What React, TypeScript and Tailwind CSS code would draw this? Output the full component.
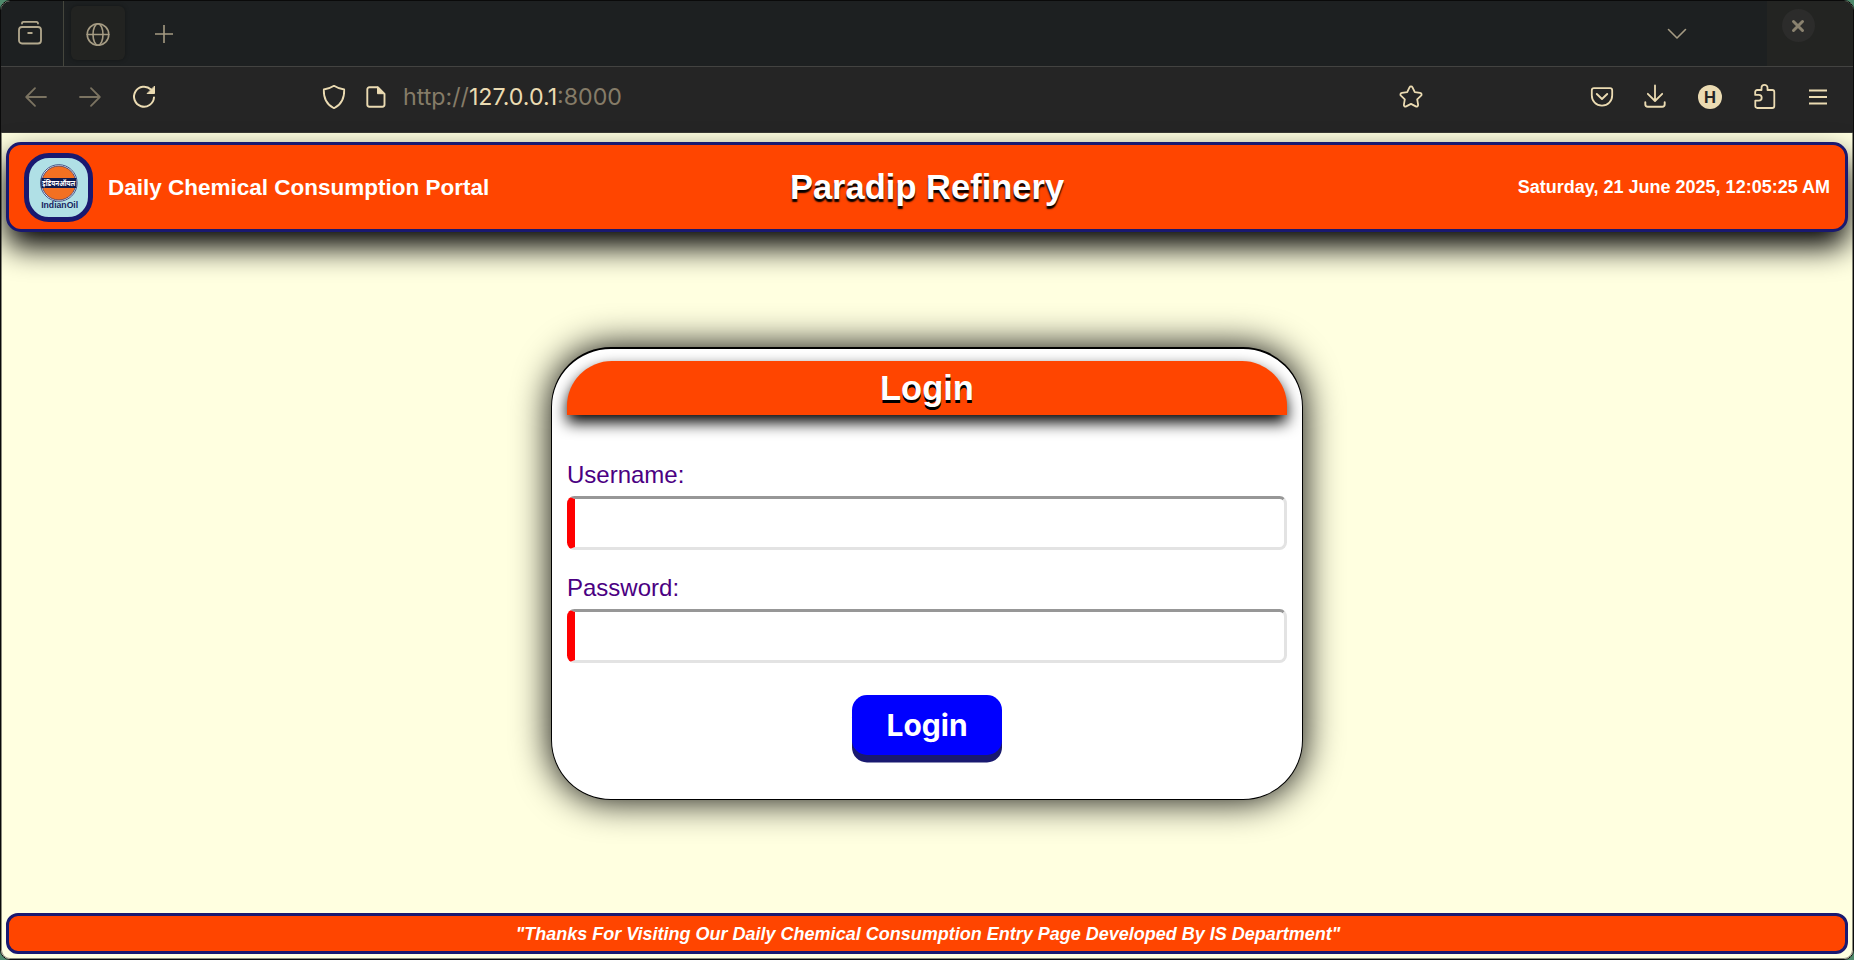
import React from "react";

type IconProps = { w: number; h: number; className?: string; children: React.ReactNode };

function Icon({ w, h, className = "", children }: IconProps) {
  return (
    <svg
      width={w}
      height={h}
      viewBox={`0 0 ${w} ${h}`}
      fill="none"
      stroke="currentColor"
      strokeWidth="1.6"
      strokeLinecap="round"
      strokeLinejoin="round"
      className={`shrink-0 ${className}`}
    >
      {children}
    </svg>
  );
}

function TabBar() {
  return (
    <div className="flex h-[66px] shrink-0 border-b border-[#434341] bg-[#1d2021] text-[#a59b83]">
      <div className="flex w-[63px] shrink-0 items-center border-r border-[#45463d] pl-[16px]">
        <Icon w={26} h={28} className="mt-px text-[#b3a98e]">
          <rect x="2" y="7" width="22" height="16.5" rx="3" strokeWidth="1.8" />
          <path d="M5 3.5c0-1.2.6-1.6 1.6-1.6h12.8c1 0 1.6.4 1.6 1.6" strokeWidth="1.8" />
          <path d="M10.5 13h5" strokeWidth="2" strokeLinecap="butt" />
        </Icon>
      </div>
      <div className="ml-[7px] mt-[5px] flex h-[54px] w-[54px] shrink-0 items-center justify-center rounded-md bg-[#222321] pt-px shadow-[0_0_4px_rgba(0,0,0,0.35)]">
        <Icon w={24} h={24}>
          <circle cx="12" cy="12.5" r="10.8" />
          <ellipse cx="12" cy="12.5" rx="5" ry="10.8" />
          <path d="M1.2 12.5h21.6" />
        </Icon>
      </div>
      <div className="flex w-[78px] items-center justify-center">
        <Icon w={20} h={20} className="mt-px">
          <path d="M10 1v18M1 10h18" strokeLinecap="butt" />
        </Icon>
      </div>
      <div className="flex-1" />
      <div className="flex w-[100px] items-center">
        <Icon w={20} h={12}>
          <path d="M1.5 1.5 10 10l8.500-8.500" />
        </Icon>
      </div>
      <div className="flex w-[86px] shrink-0 justify-center bg-[#232422] pr-[24px] pt-[8px]">
        <div className="flex h-[33px] w-[33px] items-center justify-center rounded-full bg-[#2c2c2b] text-[#8a826f]">
          <Icon w={14} h={14}>
            <path d="m2.500 2.500 9 9m0-9-9 9" strokeWidth="3" />
          </Icon>
        </div>
      </div>
    </div>
  );
}

function AddressBar() {
  return (
    <div className="flex h-[66px] shrink-0 items-center border-b border-[#3a3a36] bg-[#252525] pb-[5px] pl-[23px] pr-[25px] text-[#ebdbb2]">
      <Icon w={24} h={24} className="text-[#7b7361]">
        <path d="M22 12H2.500M11 3.200 2.200 12l8.800 8.800" strokeWidth="1.8" />
      </Icon>
      <Icon w={24} h={24} className="ml-[30px] text-[#7b7361]">
        <path d="M2 12h19.500M13 3.200l8.800 8.800-8.800 8.800" strokeWidth="1.8" />
      </Icon>
      <Icon w={26} h={26} className="ml-[29px]">
        <path d="M23 13.500a10 10 0 1 1-3-8" strokeWidth="2" />
        <path d="M23.500 2.500v7h-7z" fill="currentColor" strokeWidth="1" />
      </Icon>
      <Icon w={26} h={26} className="ml-[164px]">
        <path d="M13 1.800c3 2 6.500 3.200 10.200 3.700.3 8.200-2.500 15-10.200 18.700C5.300 20.500 2.500 13.700 2.800 5.500 6.500 5 10 3.800 13 1.800Z" strokeWidth="1.8" />
      </Icon>
      <Icon w={22} h={24} className="ml-[18px]">
        <path d="M4.500 2.200h8.300l6.700 6.700v10.600c0 1.300-.9 2.200-2.200 2.200H4.500c-1.300 0-2.200-.9-2.200-2.200V4.400c0-1.300.9-2.200 2.200-2.200Z" strokeWidth="1.9" />
        <path d="M12.500 2.200v6.500h6.500z" fill="currentColor" strokeWidth="1" />
      </Icon>
      <div className="ml-[16px] whitespace-pre pt-px font-['Inter',sans-serif] text-[23.200px] leading-none text-[#857c68]">
        http://<span className="text-[#ebdbb2]">127.0.0.1</span>:8000
      </div>
      <div className="flex-1" />
      <Icon w={26} h={26}>
        <path d="M13 2.300c.7 0 1.200.4 1.500 1l2.300 4.900 5.300.7c1.500.2 2 1.800 1 2.800l-3.900 3.700.9 5.300c.2 1.400-1 2.400-2.300 1.700L13 19.900l-4.800 2.500c-1.300.7-2.500-.3-2.300-1.700l.9-5.300-3.900-3.700c-1-1-.5-2.600 1-2.800l5.300-.7 2.300-4.900c.3-.6.8-1 1.500-1Z" strokeWidth="1.800" />
      </Icon>
      <Icon w={26} h={24} className="ml-[165px]">
        <path d="M5 3.200h16c1.300 0 2.200.9 2.200 2.200v4.800c0 5.800-4.300 10.400-10.200 10.400S2.800 16 2.800 10.200V5.400c0-1.300.9-2.200 2.200-2.200Z" strokeWidth="1.800" />
        <path d="m7.800 9 5.200 5 5.200-5" strokeWidth="1.900" />
      </Icon>
      <Icon w={24} h={26} className="ml-[28px]">
        <path d="M12 1.500v15M4.800 9.800 12 17l7.200-7.200" strokeWidth="1.800" />
        <path d="M2.300 18.200v2c0 1.500 1 2.500 2.500 2.500h14.400c1.500 0 2.500-1 2.500-2.500v-2" strokeWidth="1.900" />
      </Icon>
      <div className="ml-[31px] flex h-[24px] w-[24px] shrink-0 items-center justify-center rounded-full bg-[#ebdbb2] font-['Inter',sans-serif] text-[16px] font-bold leading-none text-[#252525]">
        H
      </div>
      <Icon w={26} h={28} className="ml-[30px]">
        <path d="M3.200 9.800V9c0-1.200.8-2 2-2h4.300V4.800a3 3 0 0 1 6 0V7h4.800c1.200 0 2 .8 2 2v14c0 1.200-.8 2-2 2h-15c-1.200 0-2-.8-2-2v-5.300h3.500a2.900 2.900 0 0 0 0-5.800H3.200V9.800Z" strokeWidth="1.800" />
      </Icon>
      <Icon w={20} h={20} className="ml-[30px]">
        <path d="M1 3.500h18M1 10h18M1 16.500h18" strokeWidth="1.900" strokeLinecap="butt" />
      </Icon>
    </div>
  );
}

function Logo() {
  return (
    <div className="flex h-[69px] w-[69px] shrink-0 items-center justify-center rounded-[25px] border-[5px] border-[#191970] bg-[#b0e0e6]">
      <svg width="60" height="60" viewBox="0 0 60 60" className="shrink-0">
        <circle cx="29.800" cy="26" r="18.300" fill="#fff" stroke="#1b2a6b" strokeWidth="0.800" />
        <circle cx="29.800" cy="26" r="17" fill="#f37022" stroke="#1b2a6b" strokeWidth="0.700" />
        <rect x="12.300" y="21" width="35" height="10" fill="#0f1a4d" />
        <text x="29.800" y="29" textAnchor="middle" fontFamily="Noto Sans Devanagari, Noto Sans, sans-serif" fontSize="8.500" fontWeight="700" fill="#fff" textLength="33" lengthAdjust="spacingAndGlyphs">
          इंडियनऑयल
        </text>
        <text x="30.700" y="51.300" textAnchor="middle" fontFamily="Liberation Sans, sans-serif" fontSize="9" fontWeight="700" fill="#14235f" textLength="37" lengthAdjust="spacingAndGlyphs">
          IndianOil
        </text>
      </svg>
    </div>
  );
}

function Header() {
  return (
    <header className="grid h-[90px] shrink-0 grid-cols-[1fr_auto_1fr] items-center rounded-[15px] border-[3px] border-[#191970] bg-[#ff4500] px-[15px] font-bold text-white shadow-[0_15px_30px_#000]">
      <div className="flex items-center">
        <Logo />
        <span className="ml-[15px] whitespace-nowrap pt-[2px] text-[22.500px]">Daily Chemical Consumption Portal</span>
      </div>
      <h1 className="text-[34.500px] leading-none [text-shadow:0_3px_1.500px_#000]">Paradip Refinery</h1>
      <span className="justify-self-end whitespace-nowrap text-[18px]">Saturday, 21 June 2025, 12:05:25 AM</span>
    </header>
  );
}

function Field({ label, type }: { label: string; type: string }) {
  return (
    <label className="mb-[23px] block pt-px text-[24px] leading-[27px] text-[#4b0082]">
      {label}
      <input
        type={type}
        className="mt-[8px] block h-[54px] w-full rounded-[7.500px] border-[3px] border-l-[8px] border-b-[#e3e3e3] border-l-[#f00] border-r-[#e3e3e3] border-t-[#979797] bg-white px-3 outline-none"
      />
    </label>
  );
}

function LoginCard() {
  return (
    <form className="h-[453px] w-[752px] rounded-[60px] border border-t-2 border-black bg-white px-[15px] pt-[12px] shadow-[0_0_37px_#000]">
      <h2 className="flex h-[54px] items-center justify-center rounded-t-[45px] bg-[#ff4500] text-[34.500px] font-bold leading-none text-white shadow-[0_7.500px_15px_#000] [text-shadow:0_3px_0_#000]">
        Login
      </h2>
      <div className="pt-[45px]">
        <Field label="Username:" type="text" />
        <Field label="Password:" type="password" />
      </div>
      <div className="flex justify-center pt-[9px]">
        <button
          type="button"
          className="flex h-[60px] w-[150px] items-center justify-center rounded-[15px] bg-[#00f] font-['Inter',sans-serif] text-[30px] font-bold leading-none text-white shadow-[0_7.500px_0_#191970]"
        >
          Login
        </button>
      </div>
    </form>
  );
}

export default function App() {
  return (
    <div className="h-[960px] w-[1854px] overflow-hidden bg-[#4f8a6c] font-['Liberation_Sans',Arial,sans-serif]">
      <div className="flex h-full flex-col overflow-hidden rounded-[10px] border border-[#0a0a0a] bg-[#ffffe0]">
        <TabBar />
        <AddressBar />
        <main className="flex min-h-0 flex-1 flex-col rounded-b-[9px] border-x border-b border-[#8a8a7c] bg-[#ffffe0] px-[4px] pb-[4px] pt-[9px]">
          <div className="flex min-h-0 flex-1 flex-col">
            <Header />
            <div className="flex flex-1 justify-center pt-[115px]">
              <LoginCard />
            </div>
          </div>
          <footer className="flex h-[41px] shrink-0 items-center justify-center rounded-[12px] border-[3px] border-[#191970] bg-[#ff4500] pl-[2px] pt-[2px] text-[18px] font-bold italic text-white">
            "Thanks For Visiting Our Daily Chemical Consumption Entry Page Developed By IS Department"
          </footer>
        </main>
      </div>
    </div>
  );
}
